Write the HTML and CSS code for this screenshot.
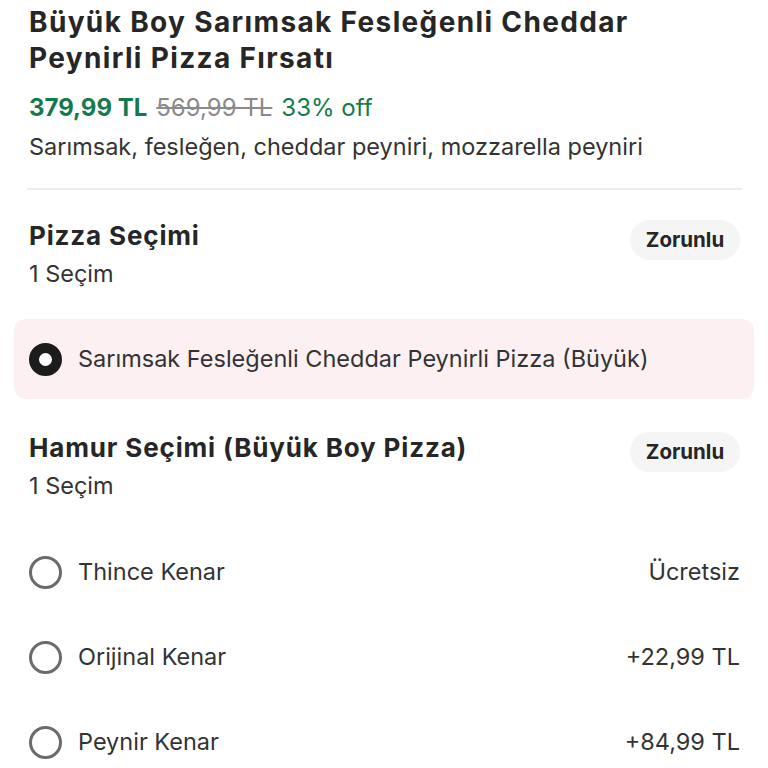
FILE: index.html
```html
<!DOCTYPE html>
<html lang="tr">
<head>
<meta charset="utf-8">
<link rel="stylesheet" href="styles.css">
</head>
<body>
<main class="page">
  <header class="product">
    <h1 class="title">Büyük Boy Sarımsak Fesleğenli Cheddar Peynirli Pizza Fırsatı</h1>
    <div class="price-row">
      <span class="price">379,99 TL</span>
      <span class="old-price">569,99 TL</span>
      <span class="discount">33% off</span>
    </div>
    <p class="desc">Sarımsak, fesleğen, cheddar peyniri, mozzarella peyniri</p>
  </header>
  <hr class="divider">

  <section class="group">
    <div class="group-head">
      <div class="group-text">
        <h2 class="group-title">Pizza Seçimi</h2>
        <div class="group-sub">1 Seçim</div>
      </div>
      <span class="badge">Zorunlu</span>
    </div>
    <div class="option option-selected">
      <span class="radio radio-on"></span>
      <span class="option-label">Sarımsak Fesleğenli Cheddar Peynirli Pizza (Büyük)</span>
    </div>
  </section>

  <section class="group group-second">
    <div class="group-head">
      <div class="group-text">
        <h2 class="group-title">Hamur Seçimi (Büyük Boy Pizza)</h2>
        <div class="group-sub">1 Seçim</div>
      </div>
      <span class="badge">Zorunlu</span>
    </div>
    <div class="list">
      <div class="option">
        <span class="radio"></span>
        <span class="option-label">Thince Kenar</span>
        <span class="option-price">Ücretsiz</span>
      </div>
      <div class="option">
        <span class="radio"></span>
        <span class="option-label">Orijinal Kenar</span>
        <span class="option-price">+22,99 TL</span>
      </div>
      <div class="option">
        <span class="radio"></span>
        <span class="option-label">Peynir Kenar</span>
        <span class="option-price">+84,99 TL</span>
      </div>
    </div>
  </section>
</main>
</body>
</html>
```

FILE: styles.css
```css
* { box-sizing: border-box; }
html, body { margin: 0; padding: 0; background: #fff; }
body {
  font-family: Inter, "Noto Sans", "Liberation Sans", sans-serif;
  color: #2b2b2b;
  overflow: hidden;
}
.page { padding: 4px 28px 0 29px; }
.title {
  margin: 0;
  font-size: 28px;
  line-height: 36px;
  font-weight: 700;
  color: #262626;
  letter-spacing: 1.35px;
  max-width: 640px;
}
.price-row {
  margin-top: 17px;
  font-size: 24px;
  line-height: 30px;
  display: flex;
  gap: 9px;
}
.price { color: #137a4d; font-weight: 700; }
.old-price { color: #8a8a8a; text-decoration: line-through; }
.discount { color: #137a4d; }
.desc {
  margin: 9px 0 0;
  font-size: 23.5px;
  line-height: 30px;
  color: #333;
}
.divider {
  border: 0;
  height: 2px;
  background: #ededed;
  margin: 26px 0 0 -2px;
  width: calc(100% + 4px);
}
.group { margin-top: 30px; }
.group-second { margin-top: 33px; }
.group-head {
  display: flex;
  justify-content: space-between;
  align-items: flex-start;
}
.group-title {
  margin: 0;
  font-size: 26px;
  line-height: 32px;
  font-weight: 700;
  color: #262626;
  letter-spacing: 0.85px;
}
.group-sub {
  margin-top: 7px;
  font-size: 23.5px;
  line-height: 30px;
  color: #333;
}
.badge {
  height: 40px;
  width: 110px;
  text-align: center;
  border-radius: 20px;
  background: #f5f5f5;
  font-size: 20.5px;
  font-weight: 700;
  line-height: 40px;
  color: #262626;
}
.option {
  display: flex;
  align-items: center;
  height: 85px;
  font-size: 23.5px;
  line-height: 30px;
  color: #333;
}
.option-selected {
  margin: 30px -14px 0 -15px;
  padding: 0 15px;
  height: 80px;
  background: #fcf0f3;
  border-radius: 12px;
}
.radio {
  width: 33px;
  height: 33px;
  border-radius: 50%;
  border: 3px solid #6b6b6b;
  flex: none;
  margin-right: 16px;
}
.radio-on {
  border: 10.5px solid #1c1c1c;
  background: #fff;
}
.option-label { flex: 1; }
.option-price { color: #333; }
.list { margin-top: 28.5px; }
```
